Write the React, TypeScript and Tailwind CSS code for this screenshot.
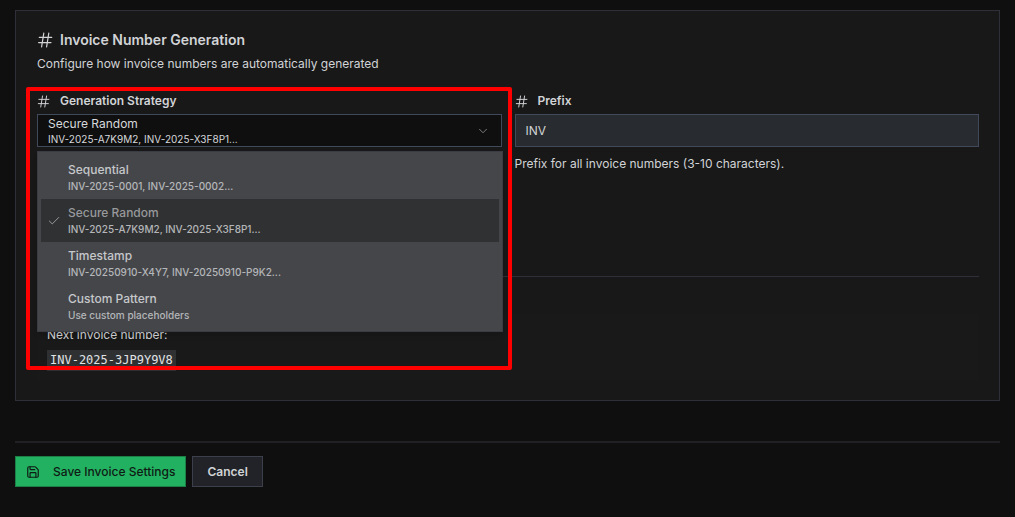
import React, { useState } from 'react'
import { Check, ChevronDown, Save } from 'lucide-react'

const strategies = [
  { value: 'sequential', label: 'Sequential', example: 'INV-2025-0001, INV-2025-0002...' },
  { value: 'random', label: 'Secure Random', example: 'INV-2025-A7K9M2, INV-2025-X3F8P1...' },
  { value: 'timestamp', label: 'Timestamp', example: 'INV-20250910-X4Y7, INV-20250910-P9K2...' },
  { value: 'custom', label: 'Custom Pattern', example: 'Use custom placeholders' },
]

const HashIcon = ({ className }: { className: string }) => (
  <svg
    viewBox="0 0 16 16"
    fill="none"
    stroke="currentColor"
    strokeWidth="1.2"
    strokeLinecap="round"
    aria-hidden="true"
    className={className}
  >
    <path d="M6.8 1.2 4.6 14.8M11.8 1.2 9.6 14.8M2.3 5.4h12.4M1.6 10.6H14" />
  </svg>
)

const StrategySelect = () => {
  const [open, setOpen] = useState(true)
  const [selected, setSelected] = useState('random')
  const current = strategies.find((s) => s.value === selected) ?? strategies[0]

  return (
    <div className="relative mt-[5px]">
      <button
        id="strategy"
        type="button"
        role="combobox"
        aria-expanded={open}
        aria-controls="strategy-list"
        aria-labelledby="strategy-label"
        onClick={() => setOpen(!open)}
        className="flex h-[33px] w-full items-center justify-between border border-[#414a5a] bg-[#0f0f0f] pr-[11px] pl-[10px] text-left"
      >
        <span className="flex flex-col">
          <span className="text-[12px] leading-4 text-[#d6d8db]">{current.label}</span>
          <span className="text-[10px] leading-[14px] text-[#d6d8db]">{current.example}</span>
        </span>
        <ChevronDown className="size-[14px] text-[#8b8d91]" strokeWidth={1.5} />
      </button>

      {open && (
        <ul
          id="strategy-list"
          role="listbox"
          aria-labelledby="strategy-label"
          className="absolute -right-px left-0 top-full z-10 mt-1 border border-[#3b3c44] bg-[#45464a] p-[3px] pt-1 shadow-md"
        >
          {strategies.map((s) => (
            <li
              key={s.value}
              role="option"
              aria-selected={s.value === selected}
              onClick={() => {
                setSelected(s.value)
                setOpen(false)
              }}
              className={`flex h-[43px] cursor-pointer items-center ${s.value === selected ? 'bg-[#303132]' : ''}`}
            >
              <span className="flex w-[27px] shrink-0 pl-[6px]">
                {s.value === selected && <Check className="size-[14px] text-[#a5a7aa]" strokeWidth={1.5} />}
              </span>
              <span className="flex flex-col">
                <span
                  className={`text-[12px] leading-4 font-medium ${s.value === selected ? 'text-[#97999c]' : 'text-[#c6c8cb]'}`}
                >
                  {s.label}
                </span>
                <span className="text-[10px] leading-4 font-medium text-[#b4b6b9]">{s.example}</span>
              </span>
            </li>
          ))}
        </ul>
      )}
    </div>
  )
}

const App = () => {
  const [prefix, setPrefix] = useState('INV')

  return (
    <div className="min-h-screen bg-[#0f0f0f] px-[15px] py-[10px] font-['Inter','Liberation_Sans',sans-serif] text-[12px] text-[#d1d3d6]">
      <section className="border border-[#2f2f3a] bg-[#181818] p-[21px] pr-5 pb-5">
        <h2 className="flex items-center gap-[7px] text-[14px] leading-4 font-semibold">
          <HashIcon className="size-4" />
          Invoice Number Generation
        </h2>
        <p className="mt-[6px] leading-5">Configure how invoice numbers are automatically generated</p>

        <div className="mt-[19px] grid grid-cols-2 gap-[13px]">
          <div className="relative">
            <label
              id="strategy-label"
              htmlFor="strategy"
              className="flex items-center gap-[10px] leading-4 font-semibold"
            >
              <HashIcon className="size-[13px]" />
              Generation Strategy
            </label>
            <StrategySelect />
            <div className="pointer-events-none absolute -right-[10px] -left-[11px] -top-[6px] z-20 h-[283px] rounded-xs border-4 border-[#ff0000]" />
          </div>

          <div>
            <label htmlFor="prefix" className="flex items-center gap-[10px] leading-4 font-semibold">
              <HashIcon className="size-[13px]" />
              Prefix
            </label>
            <input
              id="prefix"
              type="text"
              value={prefix}
              onChange={(e) => setPrefix(e.target.value)}
              className="mt-[5px] block h-[33px] w-full border border-[#414a5a] bg-[#282b2f] px-[10px] outline-none"
            />
            <p className="mt-[7px] leading-5">Prefix for all invoice numbers (3-10 characters).</p>
          </div>
        </div>

        <div className="mt-[102px] border-t border-[#2f2f3a] pt-[37px]">
          <div className="bg-[#191919] px-[10px] pt-[13px] pb-[9px]">
            <p className="leading-4">Next invoice number:</p>
            <code className="mt-[7px] block w-fit bg-[#2e3032] px-[3px] font-['DejaVu_Sans_Mono',monospace] text-[12px] leading-[21px] text-[#e0e2e4]">
              INV-2025-3JP9Y9V8
            </code>
          </div>
        </div>
      </section>

      <div className="mt-10 flex gap-[6px] border-t-2 border-[#202025] pt-[13px]">
        <button
          type="button"
          className="flex h-[31px] items-center gap-[13px] border border-[#1c7f47] bg-[#22b161] px-[10px] font-medium text-[#0f1a14]"
        >
          <Save className="size-[14px]" />
          Save Invoice Settings
        </button>
        <button
          type="button"
          className="h-[31px] border border-[#3b404a] bg-[#212328] px-[14px] font-semibold"
        >
          Cancel
        </button>
      </div>
    </div>
  )
}

export default App
